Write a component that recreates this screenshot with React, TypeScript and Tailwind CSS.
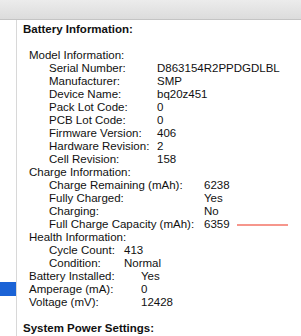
const font = { fontFamily: '"Liberation Sans", Arial, sans-serif' }

type Row = [string, string]

const model: Row[] = [
  ['Serial Number:', 'D863154R2PPDGDLBL'],
  ['Manufacturer:', 'SMP'],
  ['Device Name:', 'bq20z451'],
  ['Pack Lot Code:', '0'],
  ['PCB Lot Code:', '0'],
  ['Firmware Version:', '406'],
  ['Hardware Revision:', '2'],
  ['Cell Revision:', '158'],
]

const charge: Row[] = [
  ['Charge Remaining (mAh):', '6238'],
  ['Fully Charged:', 'Yes'],
  ['Charging:', 'No'],
  ['Full Charge Capacity (mAh):', '6359'],
]

const health: Row[] = [
  ['Cycle Count:', '413'],
  ['Condition:', 'Normal'],
]

const battery: Row[] = [
  ['Battery Installed:', 'Yes'],
  ['Amperage (mA):', '0'],
  ['Voltage (mV):', '12428'],
]

function Rows({ rows, labelW, pl }: { rows: Row[]; labelW: string; pl: string }) {
  return (
    <div className={pl}>
      {rows.map(([k, v]) => (
        <div key={k} className="flex h-[13px] items-center">
          <span className={`${labelW} shrink-0 whitespace-nowrap`}>{k}</span>
          <span className="flex items-center whitespace-nowrap">
            {v}
            {k.startsWith('Full Charge') && (
              <span className="ml-[7px] h-[2px] w-[51px] bg-[#f6968c]" />
            )}
          </span>
        </div>
      ))}
    </div>
  )
}

export default function App() {
  return (
    <div className="w-[301px] h-[336px] overflow-hidden bg-white flex flex-col text-[11.5px] text-[#111]" style={font}>
      <div className="h-[20px] shrink-0 bg-gradient-to-b from-[#ececec] to-[#dcdcdc] border-b border-[#c4c4c4]" />
      <div className="flex flex-1">
        <div className="w-[17px] shrink-0 border-r border-[#d8d8d8] pt-[262px]">
          <div className="h-[14px] bg-[#1b63d6]" />
        </div>
        <div className="pl-[6px] pt-[3px] leading-[13px]">
          <div className="h-[13px] font-bold">Battery Information:</div>
          <div className="h-[13px]" />
          <div className="pl-[6px]">
            <div className="h-[13px]">Model Information:</div>
            <Rows rows={model} labelW="w-[108px]" pl="pl-[20px]" />
            <div className="h-[13px]">Charge Information:</div>
            <Rows rows={charge} labelW="w-[155px]" pl="pl-[20px]" />
            <div className="h-[13px]">Health Information:</div>
            <Rows rows={health} labelW="w-[75px]" pl="pl-[20px]" />
            <Rows rows={battery} labelW="w-[112px]" pl="" />
          </div>
          <div className="h-[13px]" />
          <div className="h-[13px] font-bold whitespace-nowrap">System Power Settings:</div>
        </div>
      </div>
    </div>
  )
}
